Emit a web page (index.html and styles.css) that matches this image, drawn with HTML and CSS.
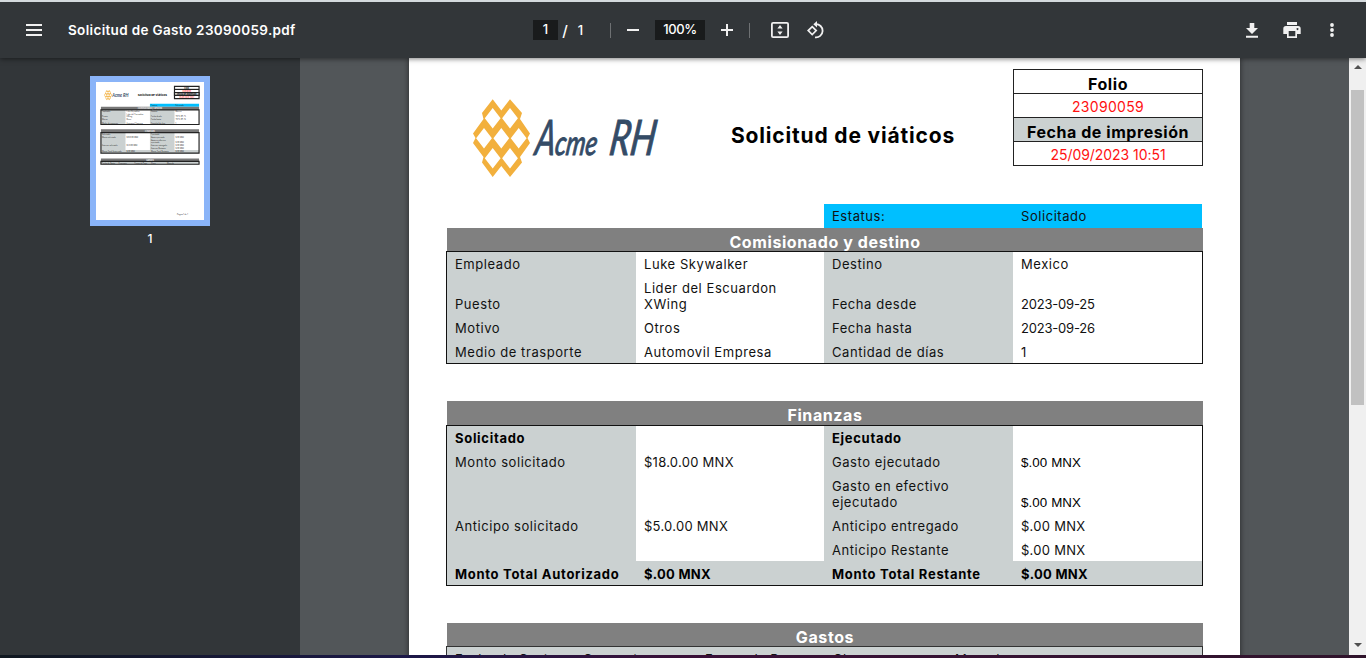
FILE: index.html
```html
<!DOCTYPE html>
<html lang="es">
<head>
<meta charset="utf-8">
<title>Solicitud de Gasto 23090059.pdf</title>
<link rel="stylesheet" href="styles.css">
</head>
<body>
<div class="viewer">
  <header class="toolbar">
    <div class="tb-left">
      <svg class="menu" width="16" height="12" viewBox="0 0 16 12"><path d="M0 1h16M0 6h16M0 11h16" stroke="#f1f1f1" stroke-width="2"/></svg>
      <span class="doc-title">Solicitud de Gasto 23090059.pdf</span>
    </div>
    <div class="tb-center">
      <span class="field page-no">1</span><span class="slash">/</span><span class="total">1</span>
      <i class="sep sep-a"></i>
      <svg class="minus" width="12" height="12" viewBox="0 0 12 12"><path d="M0 6h12" stroke="#f1f1f1" stroke-width="2"/></svg>
      <span class="field zoom">100%</span>
      <svg class="plus" width="12" height="12" viewBox="0 0 12 12"><path d="M0 6h12M6 0v12" stroke="#f1f1f1" stroke-width="2"/></svg>
      <i class="sep sep-b"></i>
      <svg class="fit" width="18" height="16" viewBox="0 0 18 16"><rect x=".9" y=".9" width="16.2" height="14.2" rx="1.2" fill="none" stroke="#f1f1f1" stroke-width="1.8"/><path d="M9 3l2.6 3.4H6.4zM9 13l2.6-3.4H6.4z" fill="#f1f1f1"/></svg>
      <svg class="rotate" width="18" height="18" viewBox="0 0 18 18"><path d="M5.2 5.6L9.2 9.6L5.2 13.6L1.2 9.6z" fill="none" stroke="#f1f1f1" stroke-width="1.7"/><path d="M8.5 3.2A6.6 6.6 0 1 1 8 16.3" fill="none" stroke="#f1f1f1" stroke-width="1.8"/><path d="M10 0v6.600L6.300 3.300z" fill="#f1f1f1"/></svg>
    </div>
    <div class="tb-right">
      <svg width="12" height="15" viewBox="0 0 12 15"><path d="M3.700 0h4.600v5H12L6 11 0 5h3.700zM0 12.800h12v1.900H0z" fill="#f1f1f1"/></svg>
      <svg width="18" height="16" viewBox="0 0 18 16"><path d="M4 0h10v3H4z" fill="#f1f1f1"/><path fill-rule="evenodd" d="M3 4h12a2.700 2.700 0 0 1 2.700 2.700V12H14v4H4v-4H.3V6.700A2.700 2.700 0 0 1 3 4zM5.700 9v5.200h6.600V9zM14.500 6a1 1 0 1 0 .01 0z" fill="#f1f1f1"/></svg>
      <svg width="4" height="14" viewBox="0 0 4 14"><g fill="#f1f1f1"><circle cx="2" cy="2" r="1.900"/><circle cx="2" cy="7" r="1.900"/><circle cx="2" cy="12" r="1.900"/></g></svg>
    </div>
  </header>

  <div class="body">
    <aside class="sidebar">
      <svg class="thumb" width="108" height="138" viewBox="0 0 831 1062" preserveAspectRatio="none">
        <defs>
          <symbol id="comb" viewBox="0 0 64 84">
            <path fill="#f2b03d" d="M12 16L22.700 2.300L31.300 13.500L40 2.300L52 16L50 22L60 36.500L57.500 41L60 46L50 60L52 65.500L40 80L31.300 69L22.700 80L12 65.500L13.500 60L3 46L5.500 41L3 36.500L13.500 22z"/>
            <path fill="#fff" d="M22.700 11l7.900 10.300-7.900 10.300-7.900-10.300zM40 11l7.900 10.300L40 31.600l-7.900-10.300zM14 31l7.900 10.300L14 51.600 6.100 41.300zM31.300 31l7.900 10.300-7.900 10.300-7.900-10.300zM48.700 31l7.900 10.300-7.900 10.300-7.900-10.300zM22.700 51l7.900 10.300-7.900 10.300-7.900-10.300zM40 51l7.900 10.300L40 71.600l-7.900-10.300z"/>
          </symbol>
        </defs>
        <rect width="831" height="1062" fill="#fff"/>
        <use href="#comb" x="61" y="60" width="64" height="84"/>
        <text class="t-logo" x="125" y="119" textLength="125" lengthAdjust="spacingAndGlyphs">Acme RH</text>
        <text class="t-title" x="322" y="107" textLength="224" lengthAdjust="spacingAndGlyphs">Solicitud de viáticos</text>
        <g stroke="#222" stroke-width="9"><path fill="#fff" d="M604 34h189v94H604z"/><path fill="#cbd1d1" d="M604 81h189v22H604z"/><path d="M604 57h189"/></g>
        <text class="t-bold" x="698" y="53" text-anchor="middle">Folio</text>
        <text class="t-red" x="698" y="76" text-anchor="middle">23090059</text>
        <text class="t-bold" x="698" y="100" text-anchor="middle">Fecha de impresión</text>
        <text class="t-red" x="698" y="124" text-anchor="middle">25/09/2023 10:51</text>
        <path fill="#00bfff" d="M415 167h378v24H415z"/>
        <path fill="#777" d="M38 191h755v24H38zM38 364h755v24H38zM38 588h755v22H38z"/>
        <path fill="#cbd1d1" d="M38 215h189v112H38zM415 215h189v112H415zM38 389h189v159H38zM415 389h189v159H415zM38 524h755v24H38zM38 612h755v22H38z"/>
        <path fill="none" stroke="#222" stroke-width="9" d="M38 215h755v112H38zM38 389h755v159H38zM38 611h755v22H38z"/>
        <g class="t-cell">
          <text x="423" y="184">Estatus:</text><text x="612" y="184">Solicitado</text>
          <text x="46" y="232">Empleado</text><text x="235" y="232">Luke Skywalker</text><text x="423" y="232">Destino</text><text x="612" y="232">Mexico</text>
          <text x="235" y="256">Lider del Escuardon</text><text x="46" y="272">Puesto</text><text x="235" y="272">XWing</text><text x="423" y="272">Fecha desde</text><text x="612" y="272">2023-09-25</text>
          <text x="46" y="296">Motivo</text><text x="235" y="296">Otros</text><text x="423" y="296">Fecha hasta</text><text x="612" y="296">2023-09-26</text>
          <text x="46" y="320">Medio de trasporte</text><text x="235" y="320">Automovil Empresa</text><text x="423" y="320">Cantidad de días</text><text x="612" y="320">1</text>
          <text x="46" y="406">Solicitado</text><text x="423" y="406">Ejecutado</text>
          <text x="46" y="430">Monto solicitado</text><text x="235" y="430">$18.0.00 MNX</text><text x="423" y="430">Gasto ejecutado</text><text x="612" y="430">$.00 MNX</text>
          <text x="423" y="454">Gasto en efectivo</text><text x="423" y="470">ejecutado</text><text x="612" y="470">$.00 MNX</text>
          <text x="46" y="494">Anticipo solicitado</text><text x="235" y="494">$5.0.00 MNX</text><text x="423" y="494">Anticipo entregado</text><text x="612" y="494">$.00 MNX</text>
          <text x="423" y="518">Anticipo Restante</text><text x="612" y="518">$.00 MNX</text>
          <text x="46" y="542">Monto Total Autorizado</text><text x="235" y="542">$.00 MNX</text><text x="423" y="542">Monto Total Restante</text><text x="612" y="542">$.00 MNX</text>
          <text x="46" y="629">Fecha de Gasto</text><text x="174" y="629">Concepto</text><text x="296" y="629">Forma de Pago</text><text x="424" y="629">Clase</text><text x="546" y="629">Moneda</text>
          <text x="624" y="1022">Página 1 de 1</text>
        </g>
        <g fill="#eee" font-weight="700" font-size="17" text-anchor="middle"><text x="415" y="211">Comisionado y destino</text><text x="415" y="384">Finanzas</text><text x="415" y="607">Gastos</text></g>
      </svg>
      <span class="thumb-no">1</span>
    </aside>

    <main class="canvas">
      <article class="paper">
        <div class="head">
          <svg class="logo" width="196" height="84" viewBox="0 0 196 84">
            <use href="#comb" width="64" height="84"/>
            <g class="brand">
              <text class="brand-cap" transform="translate(64 58) skewX(-8)" textLength="20" lengthAdjust="spacingAndGlyphs">A</text>
              <text transform="translate(84 58) skewX(-8)" textLength="42" lengthAdjust="spacingAndGlyphs">cme</text>
              <text class="brand-cap" transform="translate(138 58) skewX(-8)" textLength="46" lengthAdjust="spacingAndGlyphs">RH</text>
            </g>
          </svg>
          <h1>Solicitud de viáticos</h1>
          <div class="folio">
            <div class="f-head">Folio</div><div class="f-val">23090059</div>
            <div class="f-head f-grey">Fecha de impresión</div><div class="f-val f-time">25/09/2023 10:51</div>
          </div>
        </div>

        <div class="status"><span>Estatus:</span><span>Solicitado</span></div>
        <h2 class="bar">Comisionado y destino</h2>
        <div class="grid trip">
          <div class="k">Empleado</div><div>Luke Skywalker</div><div class="k">Destino</div><div>Mexico</div>
          <div class="k">Puesto</div><div>Lider del Escuardon<br>XWing</div><div class="k">Fecha desde</div><div class="date">2023-09-25</div>
          <div class="k">Motivo</div><div>Otros</div><div class="k">Fecha hasta</div><div class="date">2023-09-26</div>
          <div class="k end">Medio de trasporte</div><div class="end">Automovil Empresa</div><div class="k end">Cantidad de días</div><div class="end">1</div>
        </div>

        <h2 class="bar bar-fin">Finanzas</h2>
        <div class="grid fin">
          <div class="k b">Solicitado</div><div></div><div class="k b">Ejecutado</div><div></div>
          <div class="k">Monto solicitado</div><div class="money">$18.0.00 MNX</div><div class="k">Gasto ejecutado</div><div class="alt">$.00 MNX</div>
          <div class="k"></div><div></div><div class="k">Gasto en efectivo<br>ejecutado</div><div class="alt">$.00 MNX</div>
          <div class="k">Anticipo solicitado</div><div class="money">$5.0.00 MNX</div><div class="k">Anticipo entregado</div><div class="money">$.00 MNX</div>
          <div class="k end"></div><div class="end"></div><div class="k end">Anticipo Restante</div><div class="end money">$.00 MNX</div>
          <div class="k b end">Monto Total Autorizado</div><div class="k b end money">$.00 MNX</div><div class="k b end">Monto Total Restante</div><div class="k b end money">$.00 MNX</div>
        </div>

        <h2 class="bar bar-gas">Gastos</h2>
        <div class="gas"><span>Fecha de Gasto</span><span>Concepto</span><span>Forma de Pago</span><span>Clase</span><span>Moneda</span></div>
      </article>
    </main>

    <div class="scroll">
      <svg width="8" height="4" viewBox="0 0 8 4"><path d="M4 0l4 4H0z" fill="#505050"/></svg>
      <i class="handle"></i>
      <svg class="down" width="8" height="4" viewBox="0 0 8 4"><path d="M4 4l4-4H0z" fill="#505050"/></svg>
    </div>
  </div>
  <div class="edge"></div>
</div>
</body>
</html>
```

FILE: styles.css
```css
* { box-sizing: border-box; }
body { margin: 0; font-family: Inter, "Open Sans", sans-serif; }
svg { display: block; flex: none; }
h1, h2 { margin: 0; }

.viewer { width: 1366px; height: 658px; display: flex; flex-direction: column; overflow: hidden; background: #525659; }

/* toolbar */
.toolbar { position: relative; z-index: 2; flex: none; height: 58px; display: flex; align-items: center; background: #323639; border-top: 2px solid #d4dadd; box-shadow: 0 1px 5px rgba(0,0,0,.5); color: #fff; font-size: 13px; font-weight: 500; }
.tb-left { width: 533px; display: flex; align-items: center; padding-left: 26px; gap: 26px; }
.doc-title { font-size: 13.500px; letter-spacing: .34px; font-weight: 600; }
.tb-center { display: flex; align-items: center; width: 710px; }
.field { background: #191b1c; height: 20px; line-height: 19px; text-align: center; }
.page-no { width: 25px; }
.slash { width: 14px; text-align: center; font-size: 15px; }
.total { width: 17px; text-align: center; }
.sep { width: 1px; height: 15px; background: #6e7173; }
.sep-a { margin-left: 21px; }
.minus { margin-left: 16px; }
.zoom { width: 50px; margin-left: 16px; letter-spacing: -.4px; }
.plus { margin-left: 16px; }
.sep-b { margin-left: 16px; }
.fit { margin-left: 21px; }
.rotate { margin-left: 18px; }
.tb-right { display: flex; align-items: center; gap: 25px; padding-left: 3px; }
.tb-right svg:last-child { margin-left: 4px; }

.body { flex: none; height: 597px; display: flex; overflow: hidden; }

/* thumbnails */
.sidebar { width: 300px; background: #323639; display: flex; flex-direction: column; align-items: center; padding-top: 18px; }
.thumb { box-sizing: content-box; border: 6px solid #8ab4f8; }
.thumb-no { margin-top: 5px; color: #fff; font-size: 12px; line-height: 16px; font-weight: 500; }
.t-logo { font: italic 700 42px Lato, sans-serif; fill: #344b66; }
.t-title { font-weight: 700; font-size: 21px; }
.t-bold { font-weight: 700; font-size: 16px; }
.t-red { fill: #f00; font-size: 14px; }
.t-cell { font-size: 13px; letter-spacing: .4px; fill: #222; }

/* page */
.canvas { width: 1049px; padding-left: 109px; overflow: hidden; }
.paper { width: 831px; height: 640px; padding: 11px 37px 0; background: #fff; box-shadow: 0 0 6px rgba(0,0,0,.55); font-size: 13px; line-height: 16px; letter-spacing: .56px; color: #111; }
.head { display: flex; height: 135px; align-items: flex-start; }
.logo { margin: 28px 0 0 24px; }
.brand { font: italic 400 34px Lato, sans-serif; fill: #344b66; stroke: #344b66; stroke-width: 1px; letter-spacing: 0; }
.brand-cap { font-size: 49px; }
h1 { width: 225px; margin: 55px 0 0 65px; font-size: 21px; line-height: 24px; letter-spacing: .83px; white-space: nowrap; color: #000; }
.folio { width: 190px; margin-left: 57px; border: 1px solid #222; text-align: center; }
.folio div { height: 24px; border-bottom: 1px solid #222; }
.folio div:last-child { height: 23px; border-bottom: 0; }
.f-head { font-weight: 700; font-size: 16px; line-height: 28px; color: #000; }
.f-grey { background: #cbd1d1; }
.f-val { color: #f11; line-height: 25px; font-size: 14px; letter-spacing: .3px; }
.f-time { letter-spacing: -.05px; }

.status { width: 378px; height: 24px; margin-left: 378px; padding: 4px 8px; display: grid; grid-template-columns: 189px 1fr; background: #00bfff; }
.bar { width: 756px; height: 23px; margin-left: 1px; background: #808080; color: #fff; text-align: center; font-size: 16px; line-height: 29px; letter-spacing: .6px; }
.bar-fin { margin-top: 37px; height: 24px; }
.bar-gas { margin-top: 37px; }
.grid { width: 757px; border: 1px solid #111; display: grid; grid-template-columns: 189px 188px 189px 189px; }
.grid div { display: flex; align-items: flex-end; align-content: flex-end; flex-wrap: wrap; padding: 0 8px 4px; }
.grid .end { padding-bottom: 3px; }
.grid .k { background: #cbd1d1; }
.grid .b { font-weight: 700; color: #000; letter-spacing: .7px; }
.grid .date { letter-spacing: -.2px; }
.grid .money { letter-spacing: .27px; }
.grid .alt { font-family: "Liberation Sans", Arial, sans-serif; font-size: 13.330px; padding-bottom: 3px; color: #000; letter-spacing: .1px; }
.trip { grid-template-rows: 24px 40px 24px 23px; }
.trip div:nth-child(6), .fin div:nth-child(11) { display: block; padding-top: 4px; }
.fin { grid-template-rows: 24px 24px 40px 24px 23px 24px; }
.gas { width: 757px; height: 26px; border: 1px solid #333; padding: 4px 8px; background: #cbd1d1; display: grid; grid-template-columns: 128px 122px 128px 122px 1fr; letter-spacing: .4px; }

/* scrollbar */
.scroll { width: 17px; background: #f0f0f0; display: flex; flex-direction: column; align-items: center; padding: 7px 0 8px; }
.handle { width: 13px; height: 315px; margin-top: 21px; background: #c1c1c1; }
.down { margin-top: auto; }
.edge { height: 3px; background: linear-gradient(90deg, #101820, #1c1848 30%, #3a1038 50%, #30142c); }
```
